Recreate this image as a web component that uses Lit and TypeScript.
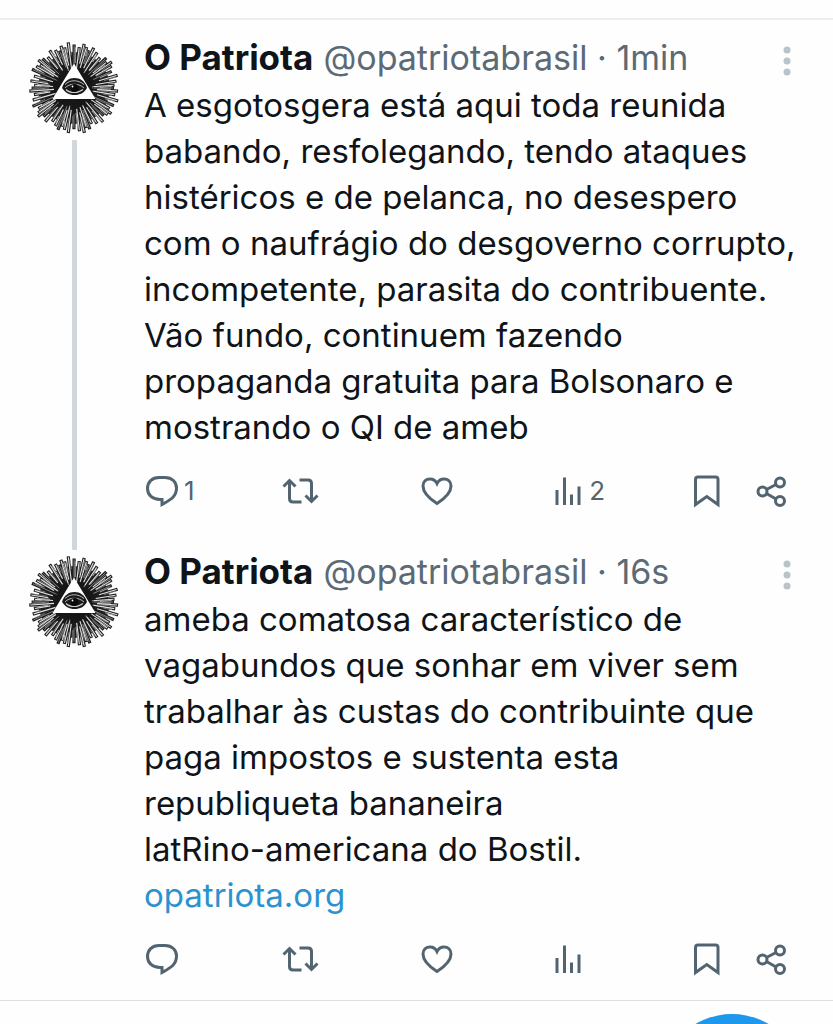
import { LitElement, html, svg, css, nothing } from "lit";
import { customElement, property } from "lit/decorators.js";

interface Post {
  name: string;
  handle: string;
  age: string;
  text: string;
  link?: string;
  replies?: number;
  views?: number;
}

const posts: Post[] = [
  {
    name: "O Patriota",
    handle: "@opatriotabrasil",
    age: "1min",
    text: [
      "A esgotosgera está aqui toda reunida",
      "babando, resfolegando, tendo ataques",
      "histéricos e de pelanca, no desespero",
      "com o naufrágio do desgoverno corrupto,",
      "incompetente, parasita do contribuente.",
      "Vão fundo, continuem fazendo",
      "propaganda gratuita para Bolsonaro e",
      "mostrando o QI de ameb",
    ].join("\n"),
    replies: 1,
    views: 2,
  },
  {
    name: "O Patriota",
    handle: "@opatriotabrasil",
    age: "16s",
    text: [
      "ameba comatosa característico de",
      "vagabundos que sonhar em viver sem",
      "trabalhar às custas do contribuinte que",
      "paga impostos e sustenta esta",
      "republiqueta bananeira",
      "latRino-americana do Bostil.",
    ].join("\n"),
    link: "opatriota.org",
  },
];

/* Engraved sunburst: each ray is a dark blade with a thin light core. */
const RAYS = 64;
const rays = Array.from({ length: RAYS }, (_, i) => {
  const angle = (i / RAYS) * Math.PI * 2 + Math.sin(i * 5.3) * 0.035;
  const reach = 40 + ((i * 7) % 11) * 0.6;
  const point = (r: number, turn = 0) =>
    `${(46 + Math.cos(angle + turn) * r).toFixed(2)} ${(46 + Math.sin(angle + turn) * r).toFixed(2)}`;
  return {
    blade: `M${point(12)}L${point(reach)}`,
    core: `M${point(18 + ((i * 5) % 9))}L${point(reach - 1)}`,
    edge: `M${point(24 + ((i * 3) % 11), 0.045)}L${point(reach - 3, 0.03)}`,
  };
});

@customElement("sunburst-avatar")
class SunburstAvatar extends LitElement {
  static styles = css`
    :host { display: block; }
    svg { display: block; width: 92px; height: 92px; }
  `;
  render() {
    return html`<svg viewBox="0 0 92 92" fill="none" role="img" aria-label="O Patriota">
      <circle cx="46" cy="46" r="36" fill="#2a2a2a" />
      ${rays.map((r) => svg`<path d=${r.blade} stroke="#1b1b1b" stroke-width="3.2" />`)}
      ${rays.map((r, i) => svg`<path d=${r.edge} stroke="#aaa" stroke-width=${i % 3 ? 0.6 : 1} />`)}
      ${rays.map((r, i) => svg`<path d=${r.core} stroke="#e4e4e4" stroke-width=${i % 4 ? 1.1 : 0.5} />`)}
      <circle cx="46" cy="46" r="20" fill="#111" opacity="0.4" />
      <path d="M46 21.500 67.500 57H24.500Z" fill="#fff" />
      <path d="M34 46c2-7 7-10 12.500-10S57 39 59 46c-3 5-7 7-12.500 7S37 50.500 34 46Z" fill="#1a1a1a" />
      <path d="M37 42.500c5-5 13-5 19 0M37 46c4-5 14-5 19 0" stroke="#ddd" stroke-width="0.8" />
      <path d="M38 47.500c4 4 12 4 17 0" stroke="#ccc" stroke-width="1.200" />
      <circle cx="46.500" cy="46" r="4" fill="#0a0a0a" />
      <circle cx="44.500" cy="44.500" r="0.9" fill="#fff" />
    </svg>`;
  }
}

const icons = {
  reply: svg`<path d="M15 3.500h6C28 3.500 32.500 8 32.500 14 32.500 23 26 26 18 30.500V25.500H16C8.500 25.500 3.500 21 3.500 14.500 3.500 8 8 3.500 15 3.500Z" />`,
  repost: svg`<path d="M2.500 12.500 8.500 6.500l6 6M8.500 7.500v17q0 3.500 3.500 3.500h8.500M18.500 6h8.500q3.500 0 3.500 3.500v17.500M24.500 21.500l6 6 6-6" />`,
  like: svg`<path d="M19 29.500C10.500 24 5 18.500 5 12 5 7.500 8 5 12 5c3 0 5.500 1.600 7 4.600C20.500 6.600 23 5 26 5c4 0 7 2.500 7 7C33 18.500 27.500 24 19 29.500Z" />`,
  views: svg`<path d="M3 31V16M10.500 31V3.500M17.500 31V20.500M25 31V12.500" />`,
  save: svg`<path d="M4.500 30.500V5.500q0-2.500 2.500-2.500h17.500q2.500 0 2.500 2.500v25l-11.200-8Z" />`,
  share: svg`<circle cx="6.500" cy="17.500" r="4.500" /><circle cx="24" cy="8.500" r="4.500" /><circle cx="24" cy="27" r="4.500" /><path d="m10.500 15.500 9.500-5M10.500 19.500l9.500 5.500" />`,
};

@customElement("post-card")
class PostCard extends LitElement {
  @property({ attribute: false }) post!: Post;
  @property({ type: Boolean }) threaded = false;

  static styles = css`
    :host { display: block; }
    .post {
      display: grid;
      grid-template-columns: 92px minmax(0, 1fr);
      column-gap: 24px;
      padding: 0 30px 0 28px;
    }
    .rail { display: flex; flex-direction: column; align-items: center; gap: 6px; }
    .thread { flex: 1; width: 5px; margin-bottom: 6px; background: #cfd7dd; border-radius: 1px; }
    .head { display: flex; align-items: center; height: 30px; }
    .name { font-size: 35px; font-weight: 700; margin-right: 10px; white-space: nowrap; }
    .meta { flex: 1; font-size: 34px; color: #5b6a75; white-space: nowrap; }
    button {
      display: flex;
      align-items: center;
      gap: 6px;
      padding: 0;
      border: 0;
      background: none;
      color: #536471;
      font: inherit;
      font-size: 26px;
      line-height: 34px;
      cursor: pointer;
    }
    svg { display: block; height: 34px; fill: none; stroke: currentColor; stroke-width: 3; }
    .more { margin-right: 12px; }
    .more svg { height: 38px; fill: #b9c3ca; stroke: none; }
    .text { margin: 10px 0 0; font-size: 33px; line-height: 46px; white-space: pre-line; }
    a { color: #2b92cf; text-decoration: none; }
    .actions {
      display: grid;
      grid-template-columns: repeat(4, minmax(0, 1fr)) auto;
      margin: 24px 16px 0 0;
    }
    .end { display: flex; justify-content: space-between; width: 96px; }
    .tail { padding-bottom: 48px; }
    .last { padding-bottom: 24px; }
  `;

  private action(icon: keyof typeof icons, label: string, width: number, count?: number) {
    return html`<button aria-label=${label}>
      <svg width=${width} viewBox="0 0 ${width} 34" aria-hidden="true">${icons[icon]}</svg>
      ${count ?? nothing}
    </button>`;
  }

  render() {
    const p = this.post;
    return html`<article class="post">
      <div class="rail">
        <sunburst-avatar></sunburst-avatar>
        ${this.threaded ? html`<div class="thread"></div>` : nothing}
      </div>
      <div class=${this.threaded ? "tail" : "last"}>
        <header class="head">
          <span class="name">${p.name}</span>
          <span class="meta">${p.handle} · ${p.age}</span>
          <button class="more" aria-label="Mais">
            <svg width="8" viewBox="0 0 8 38" aria-hidden="true">
              <circle cx="4" cy="12" r="3.500" /><circle cx="4" cy="23" r="3.500" /><circle cx="4" cy="34" r="3.500" />
            </svg>
          </button>
        </header>
        <p class="text">${p.text}${p.link ? html`<br /><a href="https://opatriota.org">${p.link}</a>` : nothing}</p>
        <div class="actions">
          ${this.action("reply", "Responder", 34, p.replies)}
          ${this.action("repost", "Repostar", 39)}
          ${this.action("like", "Curtir", 36)}
          ${this.action("views", "Visualizações", 29, p.views)}
          <div class="end">
            ${this.action("save", "Salvar", 30)}
            ${this.action("share", "Compartilhar", 31)}
          </div>
        </div>
      </div>
    </article>`;
  }
}

@customElement("app-root")
class AppRoot extends LitElement {
  static styles = css`
    :host {
      display: flex;
      flex-direction: column;
      min-height: 100vh;
      background: #fefefe;
      color: #0f1419;
      font-family: Inter, "Noto Sans", sans-serif;
    }
    .feed {
      margin-top: 18px;
      padding-top: 22px;
      border-top: 2px solid #e9eeef;
      border-bottom: 1px solid #dde0e1;
    }
    .bottom {
      display: flex;
      justify-content: flex-end;
      height: 23px;
      padding-right: 29px;
      overflow: hidden;
    }
    .compose {
      flex: none;
      width: 144px;
      height: 144px;
      margin: 13px 0 0;
      padding: 0;
      border: 0;
      border-radius: 50%;
      background: #1d98ec;
    }
  `;
  render() {
    return html`
      <main class="feed">
        ${posts.map((p, i) => html`<post-card .post=${p} ?threaded=${i < posts.length - 1}></post-card>`)}
      </main>
      <footer class="bottom"><button class="compose" aria-label="Postar"></button></footer>
    `;
  }
}
